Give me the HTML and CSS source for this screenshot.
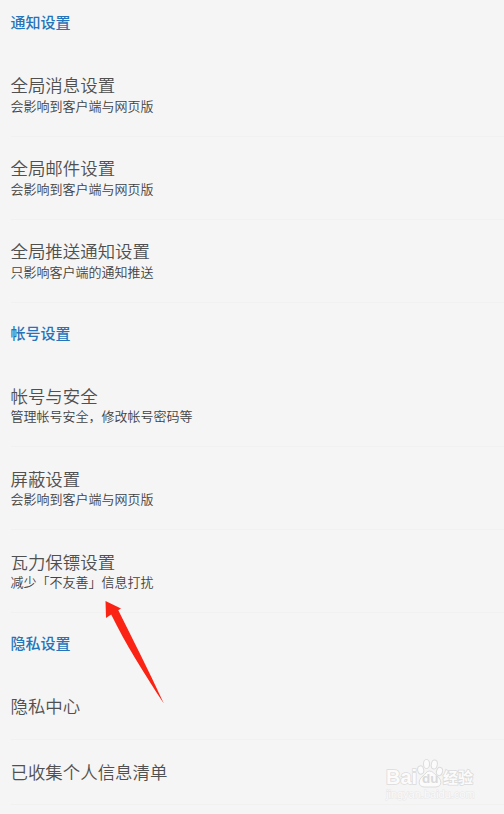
FILE: index.html
```
<!DOCTYPE html>
<html lang="zh-CN">
<head>
<meta charset="utf-8">
<title>设置</title>
<link rel="stylesheet" href="styles.css">
</head>
<body>
<main class="settings">
  <section class="group">
    <h2 class="heading heading-first">通知设置</h2>
    <div class="row"><div class="title">全局消息设置</div><div class="note">会影响到客户端与网页版</div></div>
    <div class="row"><div class="title">全局邮件设置</div><div class="note">会影响到客户端与网页版</div></div>
    <div class="row"><div class="title">全局推送通知设置</div><div class="note">只影响客户端的通知推送</div></div>
  </section>
  <section class="group">
    <h2 class="heading">帐号设置</h2>
    <div class="row"><div class="title">帐号与安全</div><div class="note">管理帐号安全，修改帐号密码等</div></div>
    <div class="row"><div class="title">屏蔽设置</div><div class="note">会影响到客户端与网页版</div></div>
    <div class="row"><div class="title">瓦力保镖设置</div><div class="note">减少「不友善」信息打扰</div></div>
  </section>
  <section class="group">
    <h2 class="heading">隐私设置</h2>
    <div class="row row-single"><div class="title">隐私中心</div></div>
    <div class="row row-single"><div class="title">已收集个人信息清单</div></div>
  </section>
</main>
<svg class="arrow" viewBox="0 0 62 106" aria-hidden="true">
  <path d="M2.500 2 18 9.600 15.300 11.300C28 37 46 72 60.800 104.500C42 76 22 44 8.200 15.500L3 19Z" fill="#fb2414"/>
</svg>
<div class="watermark">
  <div class="brand">
    <span class="latin">Bai</span>
    <span class="paw">
      <svg viewBox="0 0 26 30" aria-hidden="true">
        <g fill="#fbfbfb" stroke="#dcdcdc" stroke-width="1">
          <ellipse cx="3.700" cy="12" rx="3" ry="4.200" transform="rotate(-12 3.700 12)"/>
          <ellipse cx="9.500" cy="6" rx="3" ry="4.500"/>
          <ellipse cx="17.300" cy="6.500" rx="3" ry="4.500" transform="rotate(10 17.300 6.500)"/>
          <ellipse cx="22.500" cy="13.500" rx="3" ry="4.200" transform="rotate(14 22.500 13.500)"/>
          <path d="M12.500 13C9.500 13 8.500 16 6 18 1 21.500 .5 28.500 7 29H19C25.500 28.500 25 21.500 20 18 17 16 16 13 12.500 13Z"/>
        </g>
      </svg>
      <span class="du">du</span>
    </span>
    <span class="cjk">经验</span>
  </div>
  <div class="domain">jingyan.baidu.com</div>
</div>
</body>
</html>
```
FILE: styles.css
```
* { box-sizing: border-box; }
body {
  margin: 0;
  position: relative;
  height: 814px;
  overflow: hidden;
  background: #f5f5f5;
  color: #484848;
  font-family: "Noto Sans CJK SC", sans-serif;
}
.heading {
  margin: 0;
  height: 61px;
  padding: 19px 0 0 10.5px;
  font-size: 15px;
  line-height: 22px;
  font-weight: 500;
  color: #2574b9;
}
.heading-first { height: 54px; padding-top: 11px; }
.row {
  height: 83px;
  margin-left: 10.5px;
  padding-top: 21px;
  border-bottom: 1px solid #f1f1f1;
}
.group:first-child .row { padding-top: 20px; }
.group:first-child .note { margin-top: 1px; }
.row-single { height: 65.5px; }
.title { font-size: 17.45px; line-height: 22px; font-weight: 350; color: #505050; }
.note { font-size: 13px; line-height: 18px; font-weight: 350; color: #424242; }
.arrow { position: absolute; left: 103px; top: 599px; width: 62px; height: 106px; }
.watermark {
  position: absolute;
  left: 386px;
  top: 758px;
  width: 92px;
  color: #fbfbfb;
}
.brand { display: flex; align-items: flex-end; height: 30px; }
.latin, .cjk { -webkit-text-stroke: 1.6px #dcdcdc; paint-order: stroke fill; }
.latin { width: 31px; font: bold 20px/22px "Liberation Sans", sans-serif; }
.paw { position: relative; width: 26px; height: 30px; }
.paw svg { display: block; width: 26px; height: 30px; }
.du { position: absolute; left: 5px; top: 13px; font: bold 13.500px/16px "Liberation Sans", sans-serif; color: #dadada; }
.cjk { font-size: 15px; line-height: 22px; font-weight: 700; }
.domain { font: 11px/13px "Liberation Sans", sans-serif; white-space: nowrap; color: #fafafa; -webkit-text-stroke: 1px #e8e8e8; paint-order: stroke fill; }
```
